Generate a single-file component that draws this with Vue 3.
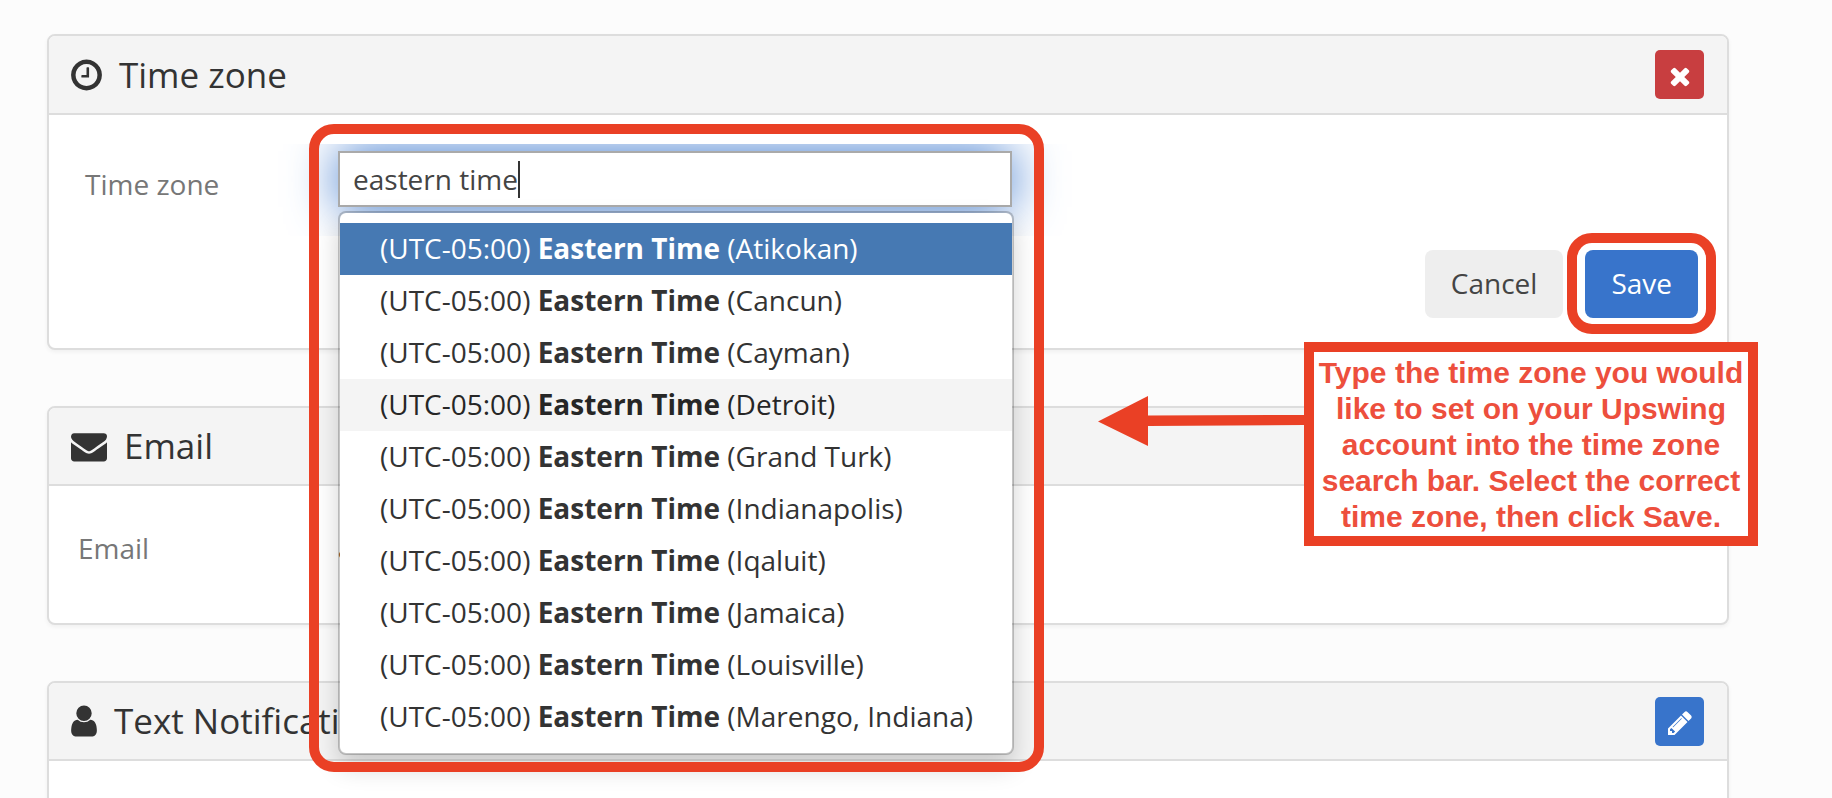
<template>
  <main class="page">
    <section class="card card-active">
      <header class="card-header">
        <h2 class="card-title">
          <svg class="icon icon-clock" viewBox="128 0 1536 1792" aria-hidden="true">
            <path :d="icons.clock" />
          </svg>
          Time zone
        </h2>
        <button type="button" class="icon-btn icon-btn-danger" aria-label="Close">
          <svg viewBox="0 0 1792 1792" aria-hidden="true"><path :d="icons.times" /></svg>
        </button>
      </header>

      <form class="card-body" @submit.prevent>
        <div class="field-row">
          <label class="field-label" for="timezone">Time zone</label>
          <div class="picker">
            <div class="glow"><div class="glow-source"></div></div>
            <input id="timezone" v-model="query" class="picker-input" type="text" autocomplete="off" />
            <span class="caret"></span>
            <div class="menu">
              <ul class="menu-list" role="listbox" aria-label="Time zones">
                <li
                  v-for="(city, idx) in cities"
                  :key="city"
                  class="menu-item"
                  :class="{ active: idx === activeIdx, hovered: idx === hoveredIdx }"
                  role="option"
                  :aria-selected="idx === activeIdx"
                  @click="activeIdx = idx"
                  @mouseenter="hoveredIdx = idx"
                >
                  (UTC-05:00) <strong>Eastern Time</strong> ({{ city }})
                </li>
              </ul>
            </div>
          </div>
        </div>
        <div class="actions">
          <button type="button" class="btn btn-default">Cancel</button>
          <div class="save-wrap">
            <button type="submit" class="btn btn-primary">Save</button>
          </div>
        </div>
      </form>

      <aside class="callout">
        <svg class="arrow" viewBox="0 0 206 50" aria-hidden="true">
          <path d="M0 25.5 50 0V19.5L206 19V29L50 30V50Z" />
        </svg>
        Type the time zone you would like to set on your Upswing account into the time zone search
        bar. Select the correct time zone, then click Save.
      </aside>
    </section>

    <section class="card">
      <header class="card-header">
        <h2 class="card-title">
          <svg class="icon icon-envelope" viewBox="0 0 1792 1792" aria-hidden="true">
            <path :d="icons.envelope" />
          </svg>
          Email
        </h2>
      </header>
      <div class="card-body card-body-static">
        <span class="static-label">Email</span>
        <span class="static-value">a</span>
      </div>
    </section>

    <section class="card">
      <header class="card-header">
        <h2 class="card-title">
          <svg class="icon icon-user" viewBox="256 0 1280 1792" aria-hidden="true">
            <path :d="icons.user" />
          </svg>
          Text Notifications
        </h2>
        <button type="button" class="icon-btn icon-btn-primary" aria-label="Edit">
          <svg viewBox="0 0 1792 1792" aria-hidden="true"><path :d="icons.pencil" /></svg>
        </button>
      </header>
      <div class="card-body card-body-empty"></div>
    </section>
  </main>
</template>

<script setup>
import { ref } from 'vue'

const query = ref('eastern time')
const activeIdx = ref(0)
const hoveredIdx = ref(3)

const cities = [
  'Atikokan',
  'Cancun',
  'Cayman',
  'Detroit',
  'Grand Turk',
  'Indianapolis',
  'Iqaluit',
  'Jamaica',
  'Louisville',
  'Marengo, Indiana',
]

// all drawn on a 1792 grid
const icons = {
  clock:
    'M1024 544v448q0 14-9 23t-23 9h-320q-14 0-23-9t-9-23v-64q0-14 9-23t23-9h224v-352q0-14 9-23t23-9h64q14 0 23 9t9 23zm416 352q0-148-73-273t-198-198-273-73-273 73-198 198-73 273 73 273 198 198 273 73 273-73 198-198 73-273zm224 0q0 209-103 385.5t-279.5 279.5-385.5 103-385.5-103-279.5-279.5-103-385.5 103-385.5 279.5-279.5 385.5-103 385.5 103 279.5 279.5 103 385.5z',
  times:
    'M1490 1322q0 40-28 68l-136 136q-28 28-68 28t-68-28l-294-294-294 294q-28 28-68 28t-68-28l-136-136q-28-28-28-68t28-68l294-294-294-294q-28-28-28-68t28-68l136-136q28-28 68-28t68 28l294 294 294-294q28-28 68-28t68 28l136 136q28 28 28 68t-28 68l-294 294 294 294q28 28 28 68z',
  envelope:
    'M1792 710v794q0 66-47 113t-113 47h-1472q-66 0-113-47t-47-113v-794q44 49 101 87 362 246 497 345 57 42 92.5 65.5t94.5 48 110 24.5h2q51 0 110-24.5t94.5-48 92.5-65.5q170-123 498-345 57-39 100-87zm0-294q0 79-49 151t-122 123q-376 261-468 325-10 7-42.5 31t-54 38.5-52 32.5-57.5 27-50 9h-2q-23 0-50-9t-57.5-27-52-32.5-54-38.5-42.5-31q-91-64-262-182.5t-205-142.5q-62-42-117-115.5t-55-136.5q0-78 41.5-130t118.5-52h1472q65 0 112.5 47t47.5 113z',
  user: 'M1536 1399q0 109-62.5 187t-150.5 78h-854q-88 0-150.5-78t-62.5-187q0-85 8.5-160.5t31.5-152 58.5-131 94-89 134.5-34.5q131 128 313 128t313-128q76 0 134.5 34.5t94 89 58.5 131 31.5 152 8.5 160.5zm-256-887q0 159-112.5 271.5t-271.5 112.5-271.5-112.5-112.5-271.5 112.5-271.5 271.5-112.5 271.5 112.5 112.5 271.5z',
  pencil:
    'M491 1536l91-91-235-235-91 91v107h128v128h107zm523-928q0-22-22-22-10 0-17 7l-542 542q-7 7-7 17 0 22 22 22 10 0 17-7l542-542q7-7 7-17zm-54-192l416 416-832 832h-416v-416zm683 96q0 53-37 90l-166 166-416-416 166-165q36-38 90-38 53 0 91 38l235 234q37 39 37 91z',
}
</script>

<style>
body {
  background: #fcfcfc;
}
</style>

<style scoped>
.page {
  box-sizing: border-box;
  display: flex;
  flex-direction: column;
  gap: 56px;
  height: 100vh;
  padding: 34px 103px 0 47px;
  overflow: hidden;
  color: #333;
  font-family: 'Open Sans', 'Noto Sans', sans-serif;
  font-size: 28px;
  line-height: 38px;
}

.card {
  flex: none;
  background: #fff;
  border: 2px solid #ddd;
  border-radius: 8px;
  box-shadow: 0 2px 4px rgba(0, 0, 0, 0.05);
}

.card-active {
  position: relative;
  z-index: 1;
}

.card-header {
  display: flex;
  align-items: center;
  justify-content: space-between;
  min-height: 76px;
  padding: 0 23px 0 22px;
  background: #f4f4f4;
  border-bottom: 2px solid #ddd;
  border-radius: 6px 6px 0 0;
}

.card-active .card-header {
  min-height: 77px;
}

.card-title {
  display: flex;
  align-items: center;
  gap: 17px;
  margin: 0;
  font-size: 35px;
  font-weight: 400;
  line-height: 48px;
}

.icon {
  height: 36px;
  fill: currentColor;
}

.icon-clock {
  width: 31px;
}

.icon-envelope {
  width: 36px;
}

.icon-user {
  width: 26px;
}

.icon-btn {
  display: flex;
  align-items: center;
  justify-content: center;
  width: 49px;
  height: 49px;
  padding: 3px 0 0;
  border: 0;
  border-radius: 5px;
}

.icon-btn svg {
  width: 28px;
  height: 28px;
  fill: #fff;
}

.icon-btn-danger {
  background: #c83e40;
}

.icon-btn-primary {
  background: #3874cb;
}

.card-body {
  padding: 36px 29px 30px 36px;
}

.field-row {
  display: grid;
  grid-template-columns: 253px minmax(0, 674px);
  margin-bottom: 43px;
}

.field-label {
  padding-top: 14px;
  color: #777;
}

.picker {
  position: relative;
}

.picker-input {
  display: block;
  box-sizing: border-box;
  width: 100%;
  height: 56px;
  padding: 0 13px;
  position: relative;
  border: 2px solid #aaa;
  outline: none;
  background: #fff;
  color: #444;
  font: inherit;
}

.caret {
  position: absolute;
  top: 10px;
  left: 180px;
  width: 2px;
  height: 37px;
  background: #333;
}

/* blue focus glow, cut off just outside the search box */
.glow {
  position: absolute;
  inset: -7px -60px -29px;
  overflow: hidden;
}

.glow-source {
  position: absolute;
  inset: 7px 60px 29px;
  box-shadow: 0 0 50px #3a76cc;
}

.menu {
  position: absolute;
  top: 60px;
  left: 0;
  right: -2px;
  padding: 10px 0;
  background: #fff;
  background-clip: padding-box;
  border: 2px solid rgba(0, 0, 0, 0.2);
  border-radius: 8px;
  box-shadow: 0 12px 24px rgba(0, 0, 0, 0.175);
}

/* highlight ring round the search box and its results */
.menu::after {
  content: '';
  position: absolute;
  inset: -89px -32px -19px -31px;
  border: 10px solid #ea4025;
  border-radius: 25px;
  pointer-events: none;
}

.menu-list {
  margin: 0;
  padding: 0;
  list-style: none;
}

.menu-item {
  padding: 6px 40px 8px;
  white-space: nowrap;
  cursor: pointer;
}

.menu-item.hovered {
  background: #f4f4f4;
  color: #262626;
}

.menu-item.active {
  background: #4679b3;
  color: #fff;
}

.actions {
  display: flex;
  justify-content: flex-end;
  gap: 22px;
}

.btn {
  height: 68px;
  padding: 0 26px 2px;
  border: 0;
  border-radius: 8px;
  font: inherit;
}

.btn-default {
  background: #eee;
  color: #444;
}

.btn-primary {
  background: #3874cb;
  color: #fff;
}

.save-wrap {
  position: relative;
}

.save-wrap::after {
  content: '';
  position: absolute;
  inset: -17px -18px -16px;
  border: 10px solid #ea4025;
  border-radius: 25px;
  pointer-events: none;
}

.callout {
  position: absolute;
  top: 306px;
  right: -31px;
  box-sizing: border-box;
  width: 454px;
  padding: 3px 0 1px;
  border: 10px solid #ea4025;
  background: #fff;
  color: #ed4f3d;
  font-family: 'Liberation Sans', Arial, sans-serif;
  font-size: 30px;
  font-weight: 700;
  line-height: 36px;
  text-align: center;
}

.arrow {
  position: absolute;
  top: 44px;
  right: 100%;
  width: 206px;
  height: 50px;
  margin-right: 10px;
  fill: #ea4025;
}

.card-body-static {
  display: grid;
  grid-template-columns: 260px 1fr;
  padding: 43px 29px 56px;
}

.static-label {
  color: #777;
}

.card-body-empty {
  min-height: 120px;
}
</style>
